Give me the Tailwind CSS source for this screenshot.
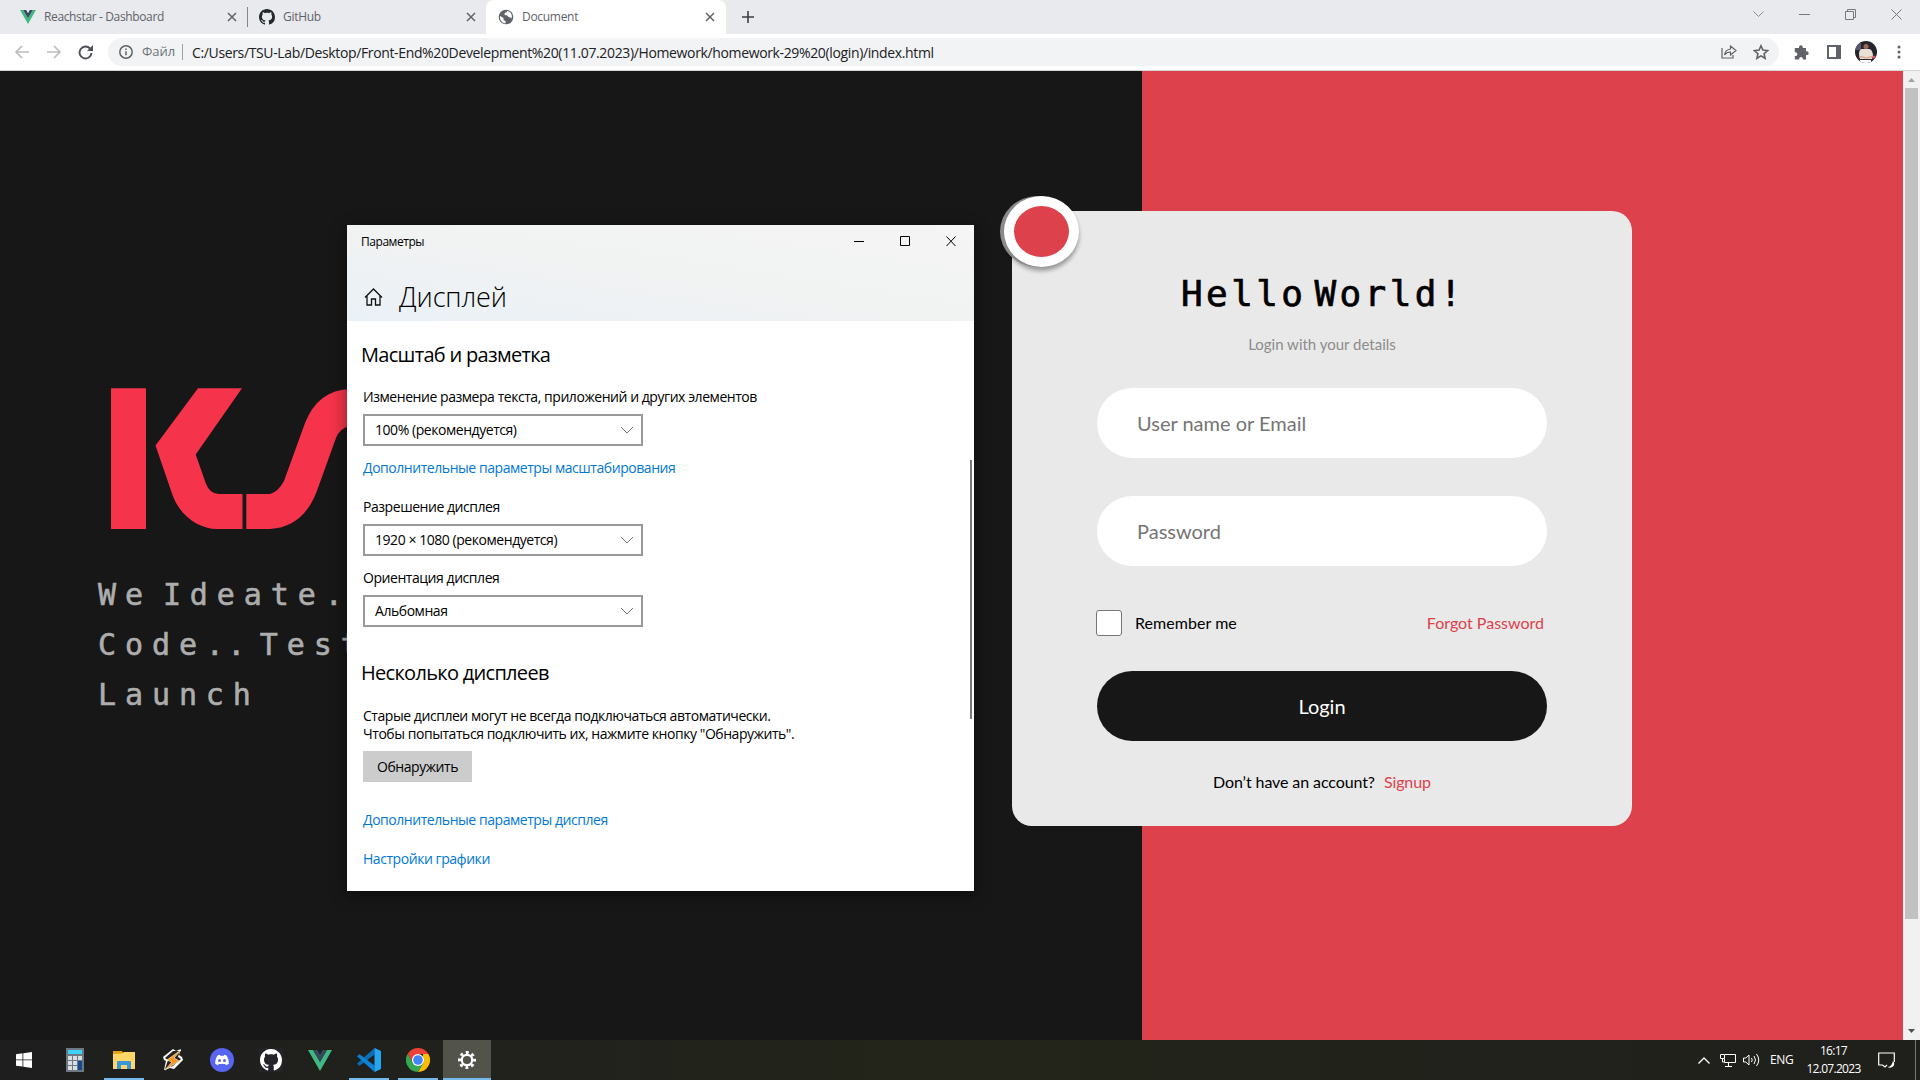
<!DOCTYPE html>
<html lang="ru">
<head>
<meta charset="utf-8">
<title>Document</title>
<script src="https://cdn.jsdelivr.net/npm/@tailwindcss/browser@4"></script>
</head>
<body class="w-[1920px] h-[1080px] overflow-hidden flex flex-col bg-[#171717] font-['Open_Sans','Noto_Sans',sans-serif] relative">

<!-- Tab strip -->
<header class="h-[34px] shrink-0 bg-[#e8eaed] flex text-[12px] text-[#5f6368]">
  <div class="w-[247px] flex items-center pl-5">
    <svg class="w-4 h-4 mr-2" viewBox="0 0 16 16"><path fill="#41b883" d="M0 1h3.200L8 9.300 12.800 1H16L8 15z"/><path fill="#35495e" d="M3.200 1h3L8 4.200 9.800 1h3L8 9.300z"/></svg>
    <span class="flex-1 tracking-[-0.36px]">Reachstar - Dashboard</span>
    <svg class="w-[10px] h-[10px] mr-[10px]" viewBox="0 0 10 10" stroke="#5f6368" stroke-width="1.5"><path d="M1 1l8 8M9 1L1 9"/></svg>
  </div>
  <div class="w-px h-5 mt-[7px] bg-[#80868b]"></div>
  <div class="w-[238px] flex items-center pl-[11px]">
    <svg class="w-4 h-4 mr-2" viewBox="0 0 16 16" fill="#24292e"><path d="M8 0C3.580 0 0 3.580 0 8c0 3.540 2.290 6.530 5.470 7.590.4.070.55-.17.55-.38 0-.19-.01-.82-.01-1.490-2.010.37-2.530-.49-2.690-.94-.09-.23-.48-.94-.82-1.130-.28-.15-.68-.52-.01-.53.63-.01 1.080.58 1.230.82.72 1.210 1.870.87 2.330.66.070-.52.28-.87.51-1.070-1.780-.2-3.640-.89-3.640-3.950 0-.87.31-1.590.82-2.150-.08-.2-.36-1.020.08-2.120 0 0 .67-.21 2.200.82.64-.18 1.320-.27 2-.27s1.360.09 2 .27c1.530-1.040 2.200-.82 2.200-.82.44 1.100.16 1.920.08 2.120.51.56.82 1.270.82 2.150 0 3.070-1.870 3.750-3.650 3.950.29.25.54.73.54 1.480 0 1.070-.01 1.930-.01 2.200 0 .21.15.46.55.38A8.010 8.010 0 0016 8c0-4.420-3.580-8-8-8z"/></svg>
    <span class="flex-1 tracking-[-0.3px]">GitHub</span>
    <svg class="w-[10px] h-[10px] mr-[10px]" viewBox="0 0 10 10" stroke="#5f6368" stroke-width="1.500"><path d="M1 1l8 8M9 1L1 9"/></svg>
  </div>
  <div class="w-[240px] bg-white rounded-t-lg flex items-center pl-3">
    <svg class="w-4 h-4 mr-2" viewBox="0 0 16 16"><circle cx="8" cy="8" r="7.300" fill="#5f6368"/><path fill="#fff" d="M2 7l3.500 2v2l2 1v2.500A6.500 6.500 0 012 7zM9 1.700c0 1-.2 1.800-1.500 1.900-.8.100-.6 1.300-1 2-.3.500 1.500.7 2.500.7 1 .2 1 2.200 2.500 2 1.300-.1 1.500.7 1.500 1.700C14.500 8 14.500 3.500 9 1.700z"/></svg>
    <span class="flex-1 tracking-[-0.3px]">Document</span>
    <svg class="w-[10px] h-[10px] mr-[11px]" viewBox="0 0 10 10" stroke="#5f6368" stroke-width="1.500"><path d="M1 1l8 8M9 1L1 9"/></svg>
  </div>
  <svg class="w-3 h-3 mt-[11px] ml-4" viewBox="0 0 12 12" stroke="#3c4043" stroke-width="1.600"><path d="M6 0v12M0 6h12"/></svg>
  <div class="ml-auto flex items-start gap-[35px] pt-[9px] pr-[18px]">
    <svg class="w-[11px] h-[11px]" viewBox="0 0 11 11" fill="none" stroke="#8b8d91"><path d="M.5 2.500l5 5 5-5"/></svg>
    <svg class="w-[11px] h-[11px]" viewBox="0 0 11 11" stroke="#77797c"><path d="M0 5.500h11"/></svg>
    <svg class="w-[11px] h-[11px]" viewBox="0 0 11 11" fill="none" stroke="#77797c"><path d="M.5 2.500h8v8h-8zM2.500 2.500v-2h8v8h-2"/></svg>
    <svg class="w-[11px] h-[11px]" viewBox="0 0 11 11" stroke="#77797c"><path d="M.5.5l10 10M10.500.5l-10 10"/></svg>
  </div>
</header>

<!-- Address bar -->
<div class="h-[37px] shrink-0 bg-white border-b border-[#d5d6d8] flex items-center">
  <svg class="w-[84px] h-5 ml-3" viewBox="0 0 84 20" fill="none" stroke-width="1.700"><g stroke="#bcbdc0"><path d="M17 10H4M10 4l-6 6 6 6M35 10h13M42 4l6 6-6 6"/></g><path stroke="#4d5156" stroke-width="1.900" d="M78 6.500A6 6 0 1079.500 11"/><path fill="#4d5156" d="M81 3v6h-6z"/></svg>
  <div class="flex-1 h-7 ml-3 rounded-full bg-[#f1f3f4] flex items-center pl-[11px] text-[14px]">
    <svg class="w-[14px] h-[14px]" viewBox="0 0 14 14" fill="none" stroke="#5f6368" stroke-width="1.500"><circle cx="7" cy="7" r="6.200"/><path d="M7 6.200v4M7 3.500V5"/></svg>
    <span class="ml-[9px] w-[33px] text-[13px] text-[#70757a]">Файл</span>
    <div class="w-px h-4 bg-[#9aa0a6] ml-[7px] mr-[9px]"></div>
    <span class="text-[#202124] tracking-[-0.36px] whitespace-nowrap">C:/Users/TSU-Lab/Desktop/Front-End%20Develepment%20(11.07.2023)/Homework/homework-29%20(login)/index.html</span>
    <svg class="w-4 h-4 ml-auto mr-4" viewBox="0 0 16 16" fill="none" stroke="#5f6368" stroke-width="1.200"><path d="M1 4v10h11v-3M9.500 5V2L15 6.500 9.500 11V8C7 8 5 9 3.500 11 4 7.500 6 5.500 9.500 5z"/></svg>
    <svg class="w-4 h-4 mr-[10px]" viewBox="0 0 16 16" fill="none" stroke="#5f6368" stroke-width="1.600"><path d="M8 1.800l1.900 4.300 4.700.5-3.500 3.100 1 4.600L8 11.900l-4.100 2.400 1-4.600L1.400 6.600l4.700-.5z"/></svg>
  </div>
  <svg class="w-[15px] h-[15px] ml-[15px]" viewBox="0 0 15 15" fill="#5f6368"><path d="M5 2.200a1.900 1.900 0 013.800 0V3H12v3.300h.8a1.900 1.900 0 010 3.800H12V14.500H8.800v-.8a1.800 1.800 0 00-3.600 0v.8H.8V11h.7a1.800 1.800 0 000-3.700H.8V3H5z"/></svg>
  <div class="w-[14px] h-[14px] ml-[18px] border-2 border-r-[5px] border-[#5f6368]"></div>
  <svg class="w-[22px] h-[22px] ml-[14px]" viewBox="0 0 22 22"><defs><clipPath id="av"><circle cx="11" cy="11" r="11"/></clipPath></defs><g clip-path="url(#av)"><path fill="#23242e" d="M0 0h22v22H0z"/><path fill="#55596a" d="M0 0h6v9H0z"/><path fill="#e9e0d5" d="M4 14c0-6 2-6 5-6h4c3 0 4 1 5 6l-1 4H5z"/><circle cx="11" cy="5.500" r="2.500" fill="#9c6b55"/><path fill="#d8a890" d="M4 14.500l6 1.500h3l5-1.500v2l-7 1-7-1z"/><path fill="#fff" d="M5 19h11v3H5z"/><circle cx="19" cy="16" r="1.600" fill="#e0506a"/></g></svg>
  <svg class="w-1 h-[14px] ml-5 mr-[19px]" viewBox="0 0 4 14" fill="#5f6368"><circle cx="2" cy="2" r="1.500"/><circle cx="2" cy="7" r="1.500"/><circle cx="2" cy="12" r="1.500"/></svg>
</div>

<!-- Page -->
<main class="h-[969px] shrink-0 flex">
  <section class="w-[1142px] bg-[#171717] pl-[98px] pt-[316px]">
    <svg class="block w-[300px] h-[143px] ml-[12px]" viewBox="110 387 300 143" fill="#f5334b"><path d="M111 388.300h35V529h-35zM198 388.300h44L195.700 454.500l10 28.500q4 11 13 11H242.500v35H217C199 529 180 516 172.500 495L155.500 445.500zM246.300 494H270q8-2 14-13L305 423q13-33 45-34h40v37h-40q-10 2-14 12L316.500 492Q303 527 270 529H246.300z"/></svg>
    <p class="mt-[40px] w-[440px] text-[30px] leading-[50px] tracking-[8.900px] [word-spacing:-16px] [-webkit-text-stroke:0.6px_#adadad] text-[#adadad] font-['DejaVu_Sans_Mono',monospace]">We Ideate<span class="tracking-[3.400px]">.</span><br>Code<span class="tracking-[3.400px]">..</span> Test<br>Launch</p>
  </section>
  <section class="flex-1 bg-[#dd414b]">
    <form class="relative w-[620px] h-[615px] mt-[140px] -ml-[130px] bg-[#e9e9e9] rounded-[20px] px-[85px] font-['Lato',sans-serif]">
      <div class="absolute -left-2 -top-[15px] w-[75px] h-[71px] rounded-[50%] border-[10px] border-white bg-[#dd414b] shadow-[-4px_0_0_#8a8a8a,0_4px_4px_rgba(0,0,0,0.35)]"></div>
      <h1 class="pt-[61px] h-[114px] pl-[84px] whitespace-nowrap text-[36px] leading-[44px] tracking-[3.400px] [word-spacing:-17px] [-webkit-text-stroke:0.7px_#000] font-['DejaVu_Sans_Mono',monospace]">Hello World!</h1>
      <p class="h-[63px] pt-[7px] text-center text-[15px] leading-6 text-[#8c8c8c]">Login with your details</p>
      <div class="h-[70px] rounded-full bg-white flex items-center pl-10 text-[20px] text-[#757575]">User name or Email</div>
      <div class="h-[70px] mt-[38px] rounded-full bg-white flex items-center pl-10 text-[20px] text-[#757575]">Password</div>
      <div class="h-[26px] mt-11 flex items-center text-[16px]">
        <div class="w-[26px] h-[26px] -ml-px rounded-[3px] border border-[#767676] bg-white"></div>
        <span class="ml-[13px] tracking-[0.050px]">Remember me</span>
        <a class="ml-auto mr-[3px] text-[#dd414b]">Forgot Password</a>
      </div>
      <div class="h-[70px] mt-[35px] rounded-full bg-[#171717] flex items-center justify-center text-[20px] text-white">Login</div>
      <p class="mt-[29px] text-center leading-6 text-[16px] tracking-[-0.1px]">Don’t have an account?<a class="ml-[9px] text-[#dd414b]">Signup</a></p>
    </form>
  </section>
  <aside class="w-[17px] bg-[#f1f1f1] flex flex-col items-center">
    <svg class="w-[17px] h-[17px]" viewBox="0 0 17 17" fill="#a3a3a3"><path d="M5 11h7L8.500 7z"/></svg>
    <div class="w-[13px] h-[831px] bg-[#c1c1c1]"></div>
    <svg class="w-[17px] h-[17px] mt-auto" viewBox="0 0 17 17" fill="#505050"><path d="M5 6h7l-3.500 4z"/></svg>
  </aside>
</main>

<!-- Display settings window -->
<div class="absolute left-[347px] top-[225px] w-[627px] h-[666px] bg-white shadow-[0_4px_16px_rgba(0,0,0,0.45)] flex flex-col text-[14px] leading-[18px] tracking-[-0.450px] text-black">
  <div class="h-[96px] bg-linear-to-tr from-[#eaf1f7] via-[#f1f2f2] to-[#f5f5f5]">
    <div class="flex items-center h-[34px] pl-[14px] text-[12px]">
      <span class="flex-1">Параметры</span>
      <svg class="w-[102px] h-[11px] mr-[18px] -mt-px" viewBox="0 0 102 11" fill="none" stroke="#000"><path d="M0 5.500h10M46.500.5h9v9h-9zM92.500.5l9 9.500M101.500.5l-9 9.500"/></svg>
    </div>
    <div class="flex items-center h-[78px] -mt-px pl-[17px]">
      <svg class="w-[19px] h-[18px]" viewBox="0 0 19 18" fill="none" stroke="#111" stroke-width="1.300"><path d="M1 9.500L9.500 1 18 9.500M3 8v9h4.500v-6h4v6H16V8"/></svg>
      <h2 class="ml-4 text-[27px] leading-9 font-light tracking-[-0.1px]">Дисплей</h2>
    </div>
  </div>
  <div class="pl-4 flex flex-col items-start">
    <h3 class="h-[42px] mt-[20px] -ml-[2px] text-[20px] leading-7 tracking-[-0.7px]">Масштаб и разметка</h3>
    <p class="mt-[5px]">Изменение размера текста, приложений и других элементов</p>
    <div class="mt-2 w-[280px] h-8 border-2 border-[#999] flex items-center pl-[10px] pr-2"><span class="flex-1">100% (рекомендуется)</span><svg class="w-3 h-2" viewBox="0 0 12 8" fill="none" stroke="#777"><path d="M0 1l6 6 6-6"/></svg></div>
    <a class="mt-[13px] text-[#0078d7]">Дополнительные параметры масштабирования</a>
    <p class="mt-[21px]">Разрешение дисплея</p>
    <div class="mt-2 w-[280px] h-8 border-2 border-[#999] flex items-center pl-[10px] pr-2"><span class="flex-1">1920 × 1080 (рекомендуется)</span><svg class="w-3 h-2" viewBox="0 0 12 8" fill="none" stroke="#777"><path d="M0 1l6 6 6-6"/></svg></div>
    <p class="mt-[13px]">Ориентация дисплея</p>
    <div class="mt-2 w-[280px] h-8 border-2 border-[#999] flex items-center pl-[10px] pr-2"><span class="flex-1">Альбомная</span><svg class="w-3 h-2" viewBox="0 0 12 8" fill="none" stroke="#777"><path d="M0 1l6 6 6-6"/></svg></div>
    <h3 class="mt-[32px] -ml-[2px] text-[20px] leading-7 tracking-[-0.7px]">Несколько дисплеев</h3>
    <p class="mt-[20px]">Старые дисплеи могут не всегда подключаться автоматически.<br>Чтобы попытаться подключить их, нажмите кнопку "Обнаружить".</p>
    <div class="mt-2 w-[109px] h-[31px] bg-[#ccc] flex items-center justify-center">Обнаружить</div>
    <a class="mt-[29px] text-[#0078d7]">Дополнительные параметры дисплея</a>
    <a class="mt-[21px] text-[#0078d7]">Настройки графики</a>
  </div>
  <div class="absolute right-[2px] top-[235px] w-[2px] h-[259px] bg-[#7a7a7a]"></div>
</div>

<!-- Taskbar -->
<footer class="h-10 shrink-0 bg-linear-to-r from-[#1e1e1e] via-[#23251a] to-[#1f201c] flex items-center text-white text-[12px]">
  <div class="w-12 h-10 flex items-center justify-center"><svg class="w-4 h-4" viewBox="0 0 16 16" fill="#fff"><path d="M0 2.200l6.500-.9v6.200H0zM7.300 1.200L16 0v7.500H7.300zM0 8.300h6.500v6.200L0 13.700zM7.300 8.300H16V16l-8.700-1.300z"/></svg></div>
  <div class="w-[53px] h-10 flex items-center justify-center"><svg class="w-[18px] h-6" viewBox="0 0 18 24"><path fill="#6d7883" d="M0 0h18v24H0z"/><path fill="#3fd0f5" d="M2 2h14v4H2z"/><path fill="#d9dee3" d="M2 8h4v4H2zM7 8h4v4H7zM12 8h4v4h-4zM2 13h4v4H2zM7 13h4v4H7zM2 18h4v4H2zM7 18h4v4H7z"/><path fill="#124a8c" d="M12 13h4v9h-4z"/></svg></div>
  <div class="w-10 h-10 ml-[3px] flex items-center justify-center border-b-2 border-[#76b9ed] pt-[2px]"><svg class="w-[22px] h-[20px]" viewBox="0 0 22 20"><path fill="#e3a008" d="M0 1h9l2 3H0z"/><path fill="#ffd667" d="M0 4l9-.5L11 2h11v17H0z"/><path fill="#3a96d8" d="M4 12q0-1 1-1h12q1 0 1 1v7h-4v-4H8v4H4z"/></svg></div>
  <div class="w-[49px] ml-1 h-10 flex items-center justify-center"><svg class="w-5 h-[22px]" viewBox="0 0 20 22"><path fill="#fff" d="M10 0L0 8l1 3 2 1-2 9 6-2 4 1 9-9-1-3-3-2 2-6-5 2z"/><path fill="#2b2420" d="M10 2l-8 7 3 2-3 9 8-3 8-7-3-2 2-6z"/><path fill="#f7941e" stroke="#fff1d0" stroke-width=".7" d="M18 1L4 11l5 2-7 8 14-9-5-3z"/></svg></div>
  <div class="w-[49px] h-10 flex items-center justify-center"><svg class="w-6 h-6" viewBox="0 0 24 24"><circle cx="12" cy="12" r="12" fill="#5865f2"/><path fill="#fff" d="M7.500 7.500l2.200-.7.600.9h3.400l.6-.9 2.200.7c1.700 2.600 2.400 5.300 2.300 8.300l-2.700 1.400-.9-1.300H8.800l-.9 1.300-2.700-1.400c-.1-3 .6-5.700 2.300-8.300z"/><circle cx="9.500" cy="12.500" r="1.500" fill="#5865f2"/><circle cx="14.500" cy="12.500" r="1.500" fill="#5865f2"/></svg></div>
  <div class="w-[49px] h-10 flex items-center justify-center"><div class="w-6 h-6 bg-[#24232a] flex items-center justify-center"><svg class="w-[22px] h-[22px]" viewBox="0 0 16 16" fill="#fff"><path d="M8 0C3.580 0 0 3.580 0 8c0 3.540 2.290 6.530 5.470 7.590.4.070.55-.17.55-.38 0-.19-.01-.82-.01-1.490-2.010.37-2.530-.49-2.690-.94-.09-.23-.48-.94-.82-1.130-.28-.15-.68-.52-.01-.53.63-.01 1.080.58 1.230.82.72 1.210 1.870.87 2.330.66.070-.52.28-.87.51-1.070-1.780-.2-3.640-.89-3.640-3.950 0-.87.31-1.590.82-2.150-.08-.2-.36-1.020.08-2.120 0 0 .67-.21 2.200.82.64-.18 1.320-.27 2-.27s1.360.09 2 .27c1.530-1.040 2.200-.82 2.200-.82.44 1.100.16 1.920.08 2.120.51.56.82 1.270.82 2.150 0 3.070-1.870 3.750-3.650 3.950.29.25.54.73.54 1.480 0 1.070-.01 1.930-.01 2.200 0 .21.15.46.55.38A8.010 8.010 0 0016 8c0-4.420-3.580-8-8-8z"/></svg></div></div>
  <div class="w-[49px] h-10 flex items-center justify-center"><svg class="w-6 h-[21px]" viewBox="0 0 24 21"><path fill="#41b883" d="M0 0h5l7 12L19 0h5L12 21z"/><path fill="#35495e" d="M5 0h4.300L12 4.500 14.700 0H19l-7 12z"/></svg></div>
  <div class="w-10 ml-[5px] h-10 pt-[2px] flex items-center justify-center border-b-2 border-[#76b9ed]"><svg class="w-6 h-6" viewBox="0 0 24 24"><path fill="#0a6fbb" d="M0 15.800L17.500 0v6.500L2.500 17.800z"/><path fill="#0a83d8" d="M0 8.200l2.500-2L17.500 17.500V24z"/><path fill="#26a6f2" d="M17.500 0L24 3v18l-6.500 3z"/></svg></div>
  <div class="w-10 ml-[9px] h-10 pt-[2px] flex items-center justify-center border-b-2 border-[#76b9ed]"><svg class="w-6 h-6" viewBox="0 0 24 24"><path fill="#ea4335" d="M1.600 6A12 12 0 0122.400 6H12v6l-5.200 3z"/><path fill="#fbbc05" d="M22.400 6A12 12 0 0112 24l5.200-9L17 6z"/><path fill="#34a853" d="M1.600 6A12 12 0 0012 24l5.200-9H6.800z"/><circle cx="12" cy="12" r="6" fill="#fff"/><circle cx="12" cy="12" r="4.800" fill="#4285f4"/></svg></div>
  <div class="w-12 ml-[5px] h-10 pt-[2px] bg-[#52544c] flex items-center justify-center border-b-2 border-[#76b9ed]"><svg class="w-[18px] h-[18px]" viewBox="0 0 18 18" fill="none" stroke="#fff"><circle cx="9" cy="9" r="5.200" stroke-width="2.200"/><circle cx="9" cy="9" r="7.500" stroke-width="3" stroke-dasharray="2.900 2.990" stroke-dashoffset="1.450"/></svg></div>

  <div class="ml-auto flex items-center">
    <svg class="w-3 h-[7px]" viewBox="0 0 12 7" fill="none" stroke="#fff" stroke-width="1.300"><path d="M.5 6.500L6 1l5.500 5.500"/></svg>
    <svg class="w-4 h-[13px] ml-[10px]" viewBox="0 0 16 13" fill="none" stroke="#fff"><path d="M5 .5h10.500v8H4.500V5M8.500 8.500v4M5 12.500h7M.5.5h4v4h-4zM2.500 4v4h2"/></svg>
    <svg class="w-[18px] h-[14px] ml-[7px]" viewBox="0 0 18 14" fill="none" stroke="#fff"><path d="M.5 5v4h2.300L6 12V2L2.800 5zM8.500 5q1.500 2 0 4M11 3q3 4 0 8M13.500 1q4.500 6 0 12"/></svg>
    <span class="ml-[9px] w-[23px] tracking-[-0.3px]">ENG</span>
    <div class="ml-[12px] w-[57px] text-center leading-[18px] tracking-[-0.7px]">16:17<br>12.07.2023</div>
    <svg class="w-[17px] h-[17px] ml-[16px] mr-5" viewBox="0 0 17 17" fill="none" stroke="#fff" stroke-width="1.200"><path d="M9 13l-2 2-2.500-2H.7V1h15.600v9"/><path fill="#fff" stroke="none" d="M15 9q2.500 3 0 5.500-2.500 2-5.500.5 4 0 5.500-6z"/></svg>
    <div class="w-px h-10 bg-[#777] mr-1"></div>
  </div>
</footer>
</body>
</html>
